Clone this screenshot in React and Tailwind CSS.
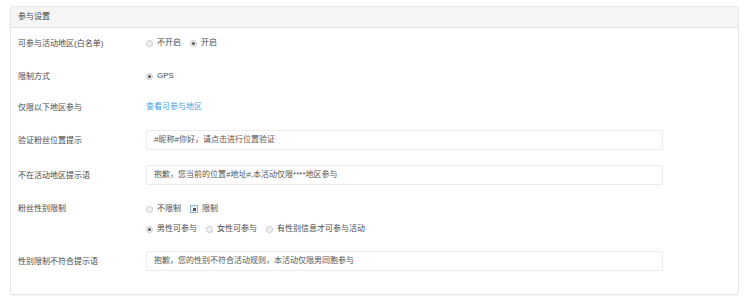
import React from 'react'

const font = { fontFamily: '"Liberation Sans", "Noto Sans CJK SC", sans-serif' }

function Radio({ checked, label }) {
  return (
    <label className="flex items-center gap-[4px] mr-[9px]">
      <span className="flex h-[7px] w-[7px] items-center justify-center rounded-full border border-[#c8c8c8] bg-[#f2f2f2]">
        {checked && <span className="h-[3px] w-[3px] rounded-full bg-[#555]" />}
      </span>
      <span>{label}</span>
    </label>
  )
}

function SquareRadio({ label }) {
  return (
    <label className="flex items-center gap-[4px] mr-[9px]">
      <span className="flex h-[8px] w-[8px] items-center justify-center border border-[#8fb4d9] bg-[#eef4fa]">
        <span className="h-[3px] w-[3px] bg-[#555]" />
      </span>
      <span>{label}</span>
    </label>
  )
}

function Row({ label, children, className = '' }) {
  return (
    <div className={`flex items-center ${className}`}>
      <div className="w-[135px] shrink-0 pl-[7px] pt-[2px]">{label}</div>
      <div className="flex items-center">{children}</div>
    </div>
  )
}

function Field({ value }) {
  return (
    <div className="flex h-[20px] w-[517px] items-center rounded-[2px] border border-[#ececec] bg-white px-[7px] text-[#555]">
      {value}
    </div>
  )
}

export default function App() {
  return (
    <div className="h-[302px] w-[746px] bg-white pt-[6px] pl-[10px] text-[8px] text-[#4a4a4a]" style={font}>
      <div className="h-[289px] w-[729px] rounded-[2px] border border-[#e6e6e6] bg-white shadow-[0_1px_1px_rgba(0,0,0,0.04)]">
        <div className="flex h-[21px] items-center border-b border-[#e3e3e3] bg-[#f5f5f5] pl-[7px] text-[#444]">
          参与设置
        </div>

        <Row label="可参与活动地区(白名单)" className="mt-[4px] h-[22px]">
          <Radio label="不开启" />
          <Radio checked label="开启" />
        </Row>

        <Row label="限制方式" className="mt-[11px] h-[22px]">
          <Radio checked label="GPS" />
        </Row>

        <Row label="仅限以下地区参与" className="mt-[9px] h-[22px]">
          <span className="text-[#4a9fe3]">查看可参与地区</span>
        </Row>

        <Row label="验证粉丝位置提示" className="mt-[11px] h-[22px]">
          <Field value="#昵称#你好，请点击进行位置验证" />
        </Row>

        <Row label="不在活动地区提示语" className="mt-[13px] h-[22px]">
          <Field value="抱歉，您当前的位置#地址#,本活动仅限****地区参与" />
        </Row>

        <div className="mt-[13px] flex">
          <div className="w-[135px] shrink-0 pl-[7px] flex h-[20px] items-center">粉丝性别限制</div>
          <div className="flex flex-col">
            <div className="flex h-[20px] items-center">
              <Radio label="不限制" />
              <SquareRadio label="限制" />
            </div>
            <div className="flex h-[20px] items-center">
              <Radio checked label="男性可参与" />
              <Radio label="女性可参与" />
              <Radio label="有性别信息才可参与活动" />
            </div>
          </div>
        </div>

        <Row label="性别限制不符合提示语" className="mt-[11px] h-[22px]">
          <Field value="抱歉，您的性别不符合活动规则，本活动仅限男同胞参与" />
        </Row>
      </div>
    </div>
  )
}
